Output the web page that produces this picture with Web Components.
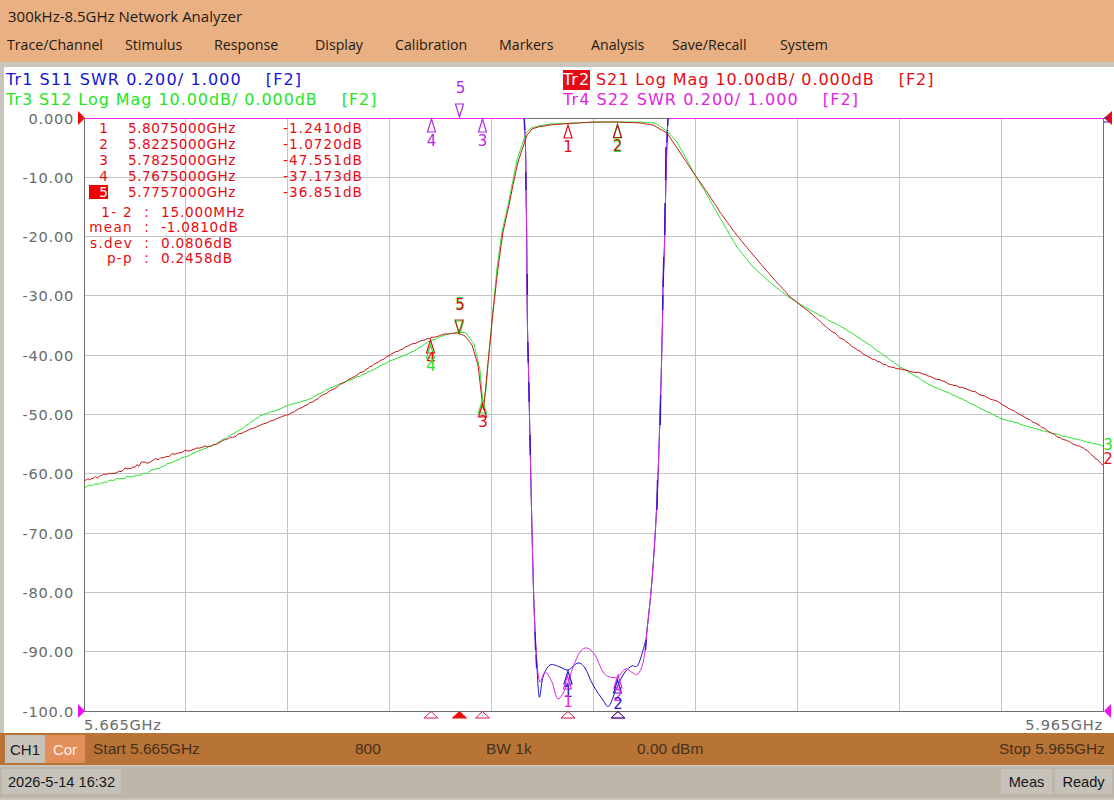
<!DOCTYPE html>
<html lang="en">
<head>
<meta charset="utf-8">
<title>Network Analyzer</title>
<style>
html,body{margin:0;padding:0;height:100%;background:#c9c5bd;overflow:hidden}
</style>
</head>
<body>
<na-app>
  <na-titlebar title-text="300kHz-8.5GHz Network Analyzer">
    <na-menu-item>Trace/Channel</na-menu-item>
    <na-menu-item>Stimulus</na-menu-item>
    <na-menu-item>Response</na-menu-item>
    <na-menu-item>Display</na-menu-item>
    <na-menu-item>Calibration</na-menu-item>
    <na-menu-item>Markers</na-menu-item>
    <na-menu-item>Analysis</na-menu-item>
    <na-menu-item>Save/Recall</na-menu-item>
    <na-menu-item>System</na-menu-item>
  </na-titlebar>
  <na-display>
    <na-plot></na-plot>
    <na-legend>
      <na-trace-label style="--ls:1.12px" color="#1414d2" name="Tr1" text="S11 SWR 0.200/ 1.000"></na-trace-label>
      <na-trace-label style="--ls:.94px" color="#e60a14" name="Tr2" text="S21 Log Mag 10.00dB/ 0.000dB" active></na-trace-label>
      <na-trace-label style="--ls:.94px" color="#22e622" name="Tr3" text="S12 Log Mag 10.00dB/ 0.000dB"></na-trace-label>
      <na-trace-label style="--ls:1.12px" color="#e224e2" name="Tr4" text="S22 SWR 0.200/ 1.000"></na-trace-label>
    </na-legend>
    <na-marker-table></na-marker-table>
  </na-display>
  <na-channel-bar></na-channel-bar>
  <na-status-bar></na-status-bar>
</na-app>
<script>
function shadow(el, html){ el.attachShadow({mode:'open'}).innerHTML = html; }

customElements.define('na-app', class extends HTMLElement{
  constructor(){ super(); shadow(this,`<style>
    :host{display:flex;flex-direction:column;width:1114px;height:800px;background:#c9c5bd}
  </style><slot></slot>`); }
});

customElements.define('na-titlebar', class extends HTMLElement{
  constructor(){ super(); shadow(this,`<style>
    :host{display:block;height:62px;background:#e9b083;color:#241a12;font-family:"Open Sans",sans-serif;margin-bottom:5px}
    .t{height:32px;padding-left:8px;line-height:32px;font-size:15px}
    .m{display:grid;grid-template-columns:118px 89px 101px 80px 104px 92px 81px 108px auto;padding-left:7px;height:30px;line-height:25px}
  </style><div class="t"></div><div class="m"><slot></slot></div>`); }
  connectedCallback(){ this.shadowRoot.querySelector('.t').textContent=this.getAttribute('title-text'); }
});

customElements.define('na-menu-item', class extends HTMLElement{
  constructor(){ super(); shadow(this,`<style>
    :host{display:block;font-size:14.2px;white-space:nowrap}
  </style><slot></slot>`); }
});

customElements.define('na-display', class extends HTMLElement{
  constructor(){ super(); shadow(this,`<style>
    :host{display:block;position:relative;height:666px;margin-left:4px;background:#fff;overflow:hidden}
  </style><slot></slot>`); }
});

customElements.define('na-legend', class extends HTMLElement{
  constructor(){ super(); shadow(this,`<style>
    :host{display:grid;grid-template-columns:557px 1fr;grid-auto-rows:20px;padding:3px 0 0 2px;position:relative;font-family:"DejaVu Sans",sans-serif}
  </style><slot></slot>`); }
});

customElements.define('na-trace-label', class extends HTMLElement{
  constructor(){ super(); shadow(this,`<style>
    :host{display:flex;gap:24px;font-size:16px;line-height:20px;white-space:nowrap;letter-spacing:var(--ls,1px)}
    .n.on{background:currentColor}
    .n.on span{color:#fff}
    .main{display:flex;gap:6px}
  </style><div class="main"><div class="n"><span></span></div><div class="x"></div></div><div class="f">[F2]</div>`); }
  connectedCallback(){
    const r=this.shadowRoot;
    this.style.color=this.getAttribute('color');
    r.querySelector('.n span').textContent=this.getAttribute('name');
    r.querySelector('.x').textContent=this.getAttribute('text');
    if(this.hasAttribute('active')) r.querySelector('.n').classList.add('on');
  }
});

customElements.define('na-marker-table', class extends HTMLElement{
  constructor(){ super();
    const rows=[['1','5.8075000GHz','-1.2410dB'],['2','5.8225000GHz','-1.0720dB'],['3','5.7825000GHz','-47.551dB'],['4','5.7675000GHz','-37.173dB'],['5','5.7757000GHz','-36.851dB']];
    const stats=[['1- 2','15.000MHz'],['mean','-1.0810dB'],['s.dev','0.0806dB'],['p-p','0.2458dB']];
    shadow(this,`<style>
    :host{display:block;position:absolute;left:85px;top:53px;color:#e60a14;font-family:"DejaVu Sans",sans-serif;font-size:13.6px;white-space:nowrap}
    .rows{display:grid;grid-template-columns:19px 255px;grid-auto-rows:16px;line-height:16px}
    .rows .id{text-align:right}
    .rows .id.sel{background:#f00000;color:#fff;height:14px;line-height:14px;margin-top:1px}
    .rows .v{display:flex;justify-content:space-between;padding-left:20px}
    .f{letter-spacing:.55px}
    .w{letter-spacing:1.05px}
    .stats{display:grid;grid-template-columns:44px 28px auto;grid-auto-rows:15.3px;line-height:15px;margin-top:5px;justify-content:start;letter-spacing:.8px}
    .stats .k{text-align:right;letter-spacing:1.3px;margin-left:-4px}
    .stats .c{text-align:center}
    </style>
    <div class="rows">${rows.map((r,i)=>`<div class="id${i==4?' sel':''}">${r[0]}</div><div class="v"><span class="f">${r[1]}</span><span class="w">${r[2]}</span></div>`).join('')}</div>
    <div class="stats">${stats.map(s=>`<div class="k">${s[0]}</div><div class="c">:</div><div>${s[1]}</div>`).join('')}</div>`);
  }
});

customElements.define('na-channel-bar', class extends HTMLElement{
  constructor(){ super(); shadow(this,`<style>
    :host{display:flex;align-items:center;height:32px;background:#b87336;color:#46301c;font-family:"Liberation Sans",sans-serif;font-size:15.5px;margin-bottom:2px;box-sizing:border-box;padding:2px 9px 2px 5px;position:relative}
    .ch{width:40px;height:28px;line-height:29px;text-align:center;background:#c8c3ba;color:#1c1c1c;font-size:15px}
    .cor{width:40px;height:28px;line-height:29px;text-align:center;background:#e28f5c;color:#fdf0e6;font-size:15px}
    .g{display:grid;flex:1;grid-template-columns:262px 131px 151px 1fr auto;padding-left:8px}
    </style>
    <div class="ch">CH1</div><div class="cor">Cor</div>
    <div class="g"><span>Start 5.665GHz</span><span>800</span><span>BW 1k</span><span>0.00 dBm</span><span>Stop 5.965GHz</span></div>`); }
});

customElements.define('na-status-bar', class extends HTMLElement{
  constructor(){ super(); shadow(this,`<style>
    :host{display:flex;gap:3px;align-items:center;height:31px;box-sizing:border-box;background:#bcb5a8;color:#15151c;font-family:"Liberation Sans",sans-serif;font-size:14.6px;padding:0 2px 2px 2px}
    div{height:25px;line-height:26px;text-align:center;background:#c6c2ba}
    .d{width:119px;margin-right:auto}
    .m{width:51px}
    .r{width:57px}
    </style><div class="d">2026-5-14 16:32</div><div class="m">Meas</div><div class="r">Ready</div>`); }
});

customElements.define('na-plot', class extends HTMLElement{
  constructor(){ super();
    const X0=84,X1=1103,Y0=118,Y1=711;
    const red=[[84,481],[113,473],[147,462],[185,451],[213,445],[240,434],[270,421],[290,414],[310,403],[330,391],[360,373],[390,355],[410,345],[430,338],[445,334],[458,333],[465,336],[472,345],[478,365],[482,400],[483.5,410],[485,395],[488,363],[492.7,315],[498,268],[503,232],[509,205],[513,185],[518,162],[523,147],[527,135],[532,129],[538,127],[550,125],[568,123.5],[595,122],[618,122],[640,123],[653,125],[667,133],[677,148],[687,163],[695,175],[707,192],[720,212],[735,233],[753,255],[773,278],[790,297],[807,310],[830,330],[850,345],[870,358],[890,367],[920,373],[950,384],[970,390],[1000,403],[1030,420],[1060,438],[1085,449],[1103,465]];
    const green=[[84,487],[113,480],[147,473],[163,466],[185,457],[213,445],[240,430],[260,416],[290,405],[310,399],[330,388],[360,376],[390,361],[410,353],[430,341],[445,335],[458,332],[466,333],[474,344],[480,370],[483,405],[486,390],[489,352],[492.5,315],[497,268],[502,232],[508,205],[512,185],[517,160],[522,145],[526,133],[531,128],[538,126],[550,124],[600,122],[640,122],[655,123],[667,131],[677,142],[687,160],[695,175],[707,195],[720,218],[737,247],[753,267],[773,285],[790,298],[810,310],[840,326],[870,345],[900,367],[930,385],[960,398],[1000,418],[1040,430],[1103,446]];
    const lsk=[[524,110],[525.7,155],[526,190],[526.7,235],[527.3,315],[528.5,370],[530,440],[532,530],[533.5,590],[535,630]];
    const rsk=[[647,630],[652,580],[657,500],[660.5,400],[662.7,310],[663,287],[664.7,237],[666,177],[668,110]];
    const blue=[...lsk,[536.7,663],[539.3,697],[543,677],[550,665],[560,667],[568,670],[578,663],[585,668],[593,685],[603,700],[609,706],[617,687],[625,672],[632,666],[638,665],[645,643],...rsk];
    const mag=[...lsk,[537,663],[540,682],[545,672],[552,682],[558,699],[567,685],[573,667],[580,652],[587,648],[595,655],[603,672],[610,677],[618,677],[625,669],[633,673],[638,674],[643,663],[646,643],...rsk];
    const smooth=(p)=>{
      let d=`M${p[0][0]} ${p[0][1]}`;
      for(let i=0;i<p.length-1;i++){
        const a=p[Math.max(i-1,0)],b=p[i],c=p[i+1],e=p[Math.min(i+2,p.length-1)];
        const k=6;
        d+=`C${(b[0]+(c[0]-a[0])/k).toFixed(1)} ${(b[1]+(c[1]-a[1])/k).toFixed(1)} ${(c[0]-(e[0]-b[0])/k).toFixed(1)} ${(c[1]-(e[1]-b[1])/k).toFixed(1)} ${c[0]} ${c[1]}`;
      }
      return d;
    };
    let seed=7;const rnd=()=>{seed=(seed*16807)%2147483647;return seed/2147483647-.5;};
    const noisy=(p,amp)=>{
      const out=[];
      for(let i=0;i<p.length-1;i++){
        const a=p[i],b=p[i+1],n=Math.max(1,Math.round((b[0]-a[0])/2));
        for(let j=0;j<n;j++){
          const t=j/n,x=a[0]+(b[0]-a[0])*t,y=a[1]+(b[1]-a[1])*t;
          const w=x<440?amp*(x<160?2.4:(x<250?1.3:.8)):(x>820?amp*.9:(x>700?amp*.3:0));
          out.push([+x.toFixed(1),+(y+rnd()*w*2).toFixed(1)]);
        }
      }
      out.push(p[p.length-1]);
      return 'M'+out.map(q=>q.join(' ')).join('L');
    };
    let grid='';
    for(let i=1;i<10;i++){const x=(X0+(X1-X0)*i/10).toFixed(1);grid+=`<path d="M${x} ${Y0}V${Y1}"/>`;}
    for(let i=1;i<10;i++){const y=(Y0+(Y1-Y0)*i/10).toFixed(1);grid+=`<path d="M${X0} ${y}H${X1}"/>`;}
    const ax=['0.000','-10.00','-20.00','-30.00','-40.00','-50.00','-60.00','-70.00','-80.00','-90.00','-100.0'];
    const axis=ax.map((t,i)=>`<text x="74" y="${(Y0+5.5+(Y1-Y0)*i/10).toFixed(1)}" text-anchor="end">${t}</text>`).join('');
    const up=(x,y,c,h=13,w=3.5,bw=1.2)=>`<path d="M${x} ${y}L${x+w+.5} ${y+h}H${x-w-.5}Z" fill="none" stroke="${c}" stroke-width="${bw}"/>`;
    const dn=(x,y,c,h=13,w=4)=>`<path d="M${x} ${y}L${x+w} ${y-h}H${x-w}Z" fill="none" stroke="${c}" stroke-width="1.2"/>`;
    const bt=(x,c,fill='none')=>`<path d="M${x} 711.5L${x+7} 718H${x-7}Z" fill="${fill}" stroke="${c}" stroke-width="1"/>`;
    const lb=(x,y,c,t)=>`<text x="${x}" y="${y}" fill="${c}" text-anchor="middle" class="m">${t}</text>`;
    const P='#b428e6',R='#e60a14',G='#28e628',B='#2814d2',M='#e628e6';
    const markers=
      up(431.5,119,P)+lb(431.5,146,P,'4')+up(482.5,119,P)+lb(482.5,146,P,'3')+dn(459.5,117,P)+lb(460.5,93,P,'5')+
      up(568,125,R)+lb(568,152,R,'1')+up(617.5,125,G)+up(617.5,124.5,'#b01414')+lb(617.5,152,G,'2')+lb(617.5,151,'#b02814','2')+
      dn(459.5,334,G)+dn(459,333,'#a83a10')+lb(460,309,G,'5')+lb(460,310,R,'5')+
      up(430.5,340,R)+up(430.5,345,G)+lb(431,364,R,'4')+lb(431,371,G,'4')+
      up(482.5,400,G)+up(482.5,404,R)+lb(483,427,R,'3')+
      up(568,671,B)+up(567.5,676,M)+lb(568,697,B,'1')+lb(568,707,M,'1')+
      up(618,675,M)+up(617.5,680,B)+lb(618,701,M,'2')+lb(618,709,B,'2')+
      bt(431,'#e0144a')+bt(459.5,'#ee0a0a','#ee0a0a')+bt(482.5,'#e0144a')+bt(568,'#e0144a')+bt(618,'#c8143c')+bt(618,'#2814b4');
    const dashes=[[524.3,118,524.6,130],[525.8,172,526,190],[527.2,274,527.4,295],[527.8,342,528.3,363],[528.7,382,529.2,402],[530,435,530.4,455],[535,632,535.6,650],[536,655,536.6,668],[668,118,667.7,126],[667.3,130,667,142],[665.9,147,665.6,180],[665,203,664.7,235],[663.7,257,663.2,287],[662.8,295,662.6,310],[660.6,395,660.3,425],[657.5,480,657,510],[646.2,640,645.6,650]];
    shadow(this,`<style>
    :host{display:block;position:absolute;inset:0}
    svg{display:block;width:1110px;height:666px;font-family:"DejaVu Sans",sans-serif}
    .grid path{stroke:#c4c4c4;stroke-width:1;fill:none}
    .axis text{font-size:14.6px;fill:#6a6a6a;letter-spacing:.75px}
    .tr{fill:none;stroke-width:1}
    .m{font-size:15px}
    </style>
    <svg viewBox="4 67 1110 666" xmlns="http://www.w3.org/2000/svg">
      <defs><clipPath id="c"><rect x="84" y="118.5" width="1019.5" height="592.5"/></clipPath></defs>
      <g class="grid" shape-rendering="crispEdges">${grid}</g>
      <path d="M84.5 118V711.5H1103.5V118" stroke="#6e6e6e" stroke-width="1.2" fill="none" shape-rendering="crispEdges"/>
      <path d="M524 118H668" stroke="#6e6e6e" stroke-width="1" fill="none" shape-rendering="crispEdges"/>
      <path d="M84 118H524M668 118H1104" stroke="#e628e6" stroke-width="1" fill="none" shape-rendering="crispEdges"/>
      <g class="axis">${axis}</g>
      <text x="84" y="730" font-size="14.6" fill="#6a6a6a" letter-spacing=".75">5.665GHz</text>
      <text x="1103" y="730" font-size="14.6" fill="#6a6a6a" letter-spacing=".75" text-anchor="end">5.965GHz</text>
      <g clip-path="url(#c)">
        <path class="tr" d="${smooth(blue)}" stroke="#1e10c8"/>
        <path class="tr" d="${smooth(mag)}" stroke="#d82cd8"/>
        <path d="${dashes.map(d=>`M${d[0]} ${d[1]}L${d[2]} ${d[3]}`).join('')}" stroke="#4010d0" stroke-width="1.4" fill="none"/>
        <path class="tr" d="${noisy(green,.45)}" stroke="#30e030"/>
        <path class="tr" d="${noisy(red,.7)}" stroke="#c41c1c"/>
      </g>
      ${markers}
      <path d="M78 111L85 118L78 125Z" fill="#ee0a0a"/>
      <path d="M78 704L85 711L78 718Z" fill="#f010f0"/>
      <path d="M1112 111L1104 118L1112 125Z" fill="#ee0a0a"/>
      <path d="M1104 118h6M1104 122h5" stroke="#2814d2" stroke-width="1" fill="none"/>
      <path d="M1111 704L1104 711L1111 718Z" fill="#f010f0"/>
      <text x="1108" y="450" font-size="15" fill="#28e628" text-anchor="middle">3</text>
      <text x="1108" y="464" font-size="15" fill="#e60a14" text-anchor="middle">2</text>
    </svg>`);
  }
});
</script>
</body>
</html>
